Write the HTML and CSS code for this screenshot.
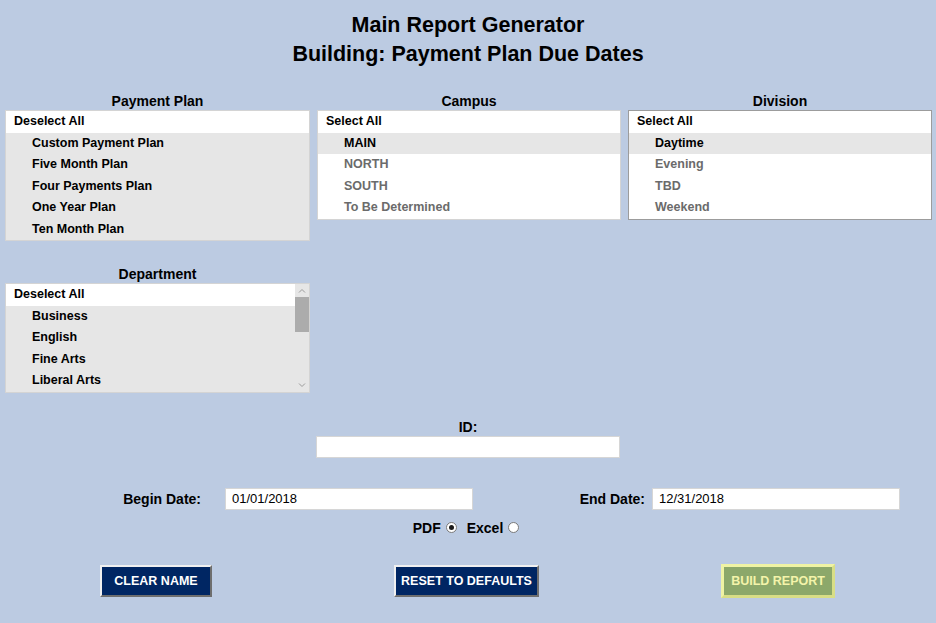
FILE: index.html
```html
<!DOCTYPE html>
<html lang="en">
<head>
    <meta charset="UTF-8">
    <title>Main Report Generator</title>
    <link rel="stylesheet" href="styles.css">
</head>
<body>
    <div class="header">
        <h1>Main Report Generator</h1>
        <h1>Building: Payment Plan Due Dates</h1>
    </div>

    <div class="lists">
        <div class="list-group">
            <div class="list-label">Payment Plan</div>
            <div class="list-box">
                <div class="row all">Deselect All</div>
                <div class="row sel">Custom Payment Plan</div>
                <div class="row sel">Five Month Plan</div>
                <div class="row sel">Four Payments Plan</div>
                <div class="row sel">One Year Plan</div>
                <div class="row sel">Ten Month Plan</div>
            </div>
        </div>

        <div class="list-group">
            <div class="list-label">Campus</div>
            <div class="list-box">
                <div class="row all">Select All</div>
                <div class="row sel">MAIN</div>
                <div class="row dim">NORTH</div>
                <div class="row dim">SOUTH</div>
                <div class="row dim">To Be Determined</div>
            </div>
        </div>

        <div class="list-group">
            <div class="list-label">Division</div>
            <div class="list-box dark">
                <div class="row all">Select All</div>
                <div class="row sel">Daytime</div>
                <div class="row dim">Evening</div>
                <div class="row dim">TBD</div>
                <div class="row dim">Weekend</div>
            </div>
        </div>

        <div class="list-group dept">
            <div class="list-label">Department</div>
            <div class="list-box scroll">
                <div class="scroll-rows">
                    <div class="row all">Deselect All</div>
                    <div class="row sel">Business</div>
                    <div class="row sel">English</div>
                    <div class="row sel">Fine Arts</div>
                    <div class="row sel">Liberal Arts</div>
                </div>
                <div class="scrollbar">
                    <svg width="8" height="5" viewBox="0 0 8 5"><path d="M1 4.5 L4 1.5 L7 4.5" fill="none" stroke="#9a9a9a" stroke-width="1"/></svg>
                    <div class="thumb"></div>
                    <div class="track"></div>
                    <svg width="8" height="5" viewBox="0 0 8 5"><path d="M1 0.5 L4 3.5 L7 0.5" fill="none" stroke="#9a9a9a" stroke-width="1"/></svg>
                </div>
            </div>
        </div>
    </div>

    <div class="id-group">
        <div class="field-label">ID:</div>
        <input type="text" class="text-input id-input">
    </div>

    <div class="dates">
        <label class="date-label begin">Begin Date:</label>
        <input type="text" class="text-input date-input" value="01/01/2018">
        <label class="date-label end">End Date:</label>
        <input type="text" class="text-input date-input end-input" value="12/31/2018">
    </div>

    <div class="formats">
        <span>PDF</span>
        <span class="radio checked"></span>
        <span class="excel">Excel</span>
        <span class="radio"></span>
    </div>

    <div class="buttons">
        <button class="btn clear-btn">CLEAR NAME</button>
        <button class="btn reset-btn">RESET TO DEFAULTS</button>
        <button class="btn build-btn">BUILD REPORT</button>
    </div>
</body>
</html>
```

FILE: styles.css
```css
body {
    margin: 0;
    background-color: #bccbe2;
    font-family: 'Liberation Sans', Arial, sans-serif;
    color: #000;
}

.header {
    padding-top: 11px;
    text-align: center;
}

h1 {
    margin: 0;
    font-size: 21.5px;
    line-height: 29px;
    font-weight: bold;
}

.lists {
    display: grid;
    grid-template-columns: 305px 304px 304px;
    column-gap: 7px;
    row-gap: 25px;
    align-items: start;
    padding-left: 5px;
    margin-top: 24px;
}

.list-label {
    text-align: center;
    font-size: 14px;
    font-weight: bold;
    line-height: 17px;
}

.list-box {
    background-color: #fff;
    border: 1px solid #d4d4d4;
}

.list-box.dark {
    border-color: #9c9c9c;
}

.row {
    height: 21.5px;
    line-height: 21px;
    font-size: 12.5px;
    font-weight: bold;
    padding-left: 26px;
    white-space: nowrap;
}

.row.all {
    padding-left: 8px;
    background-color: #fff;
}

.row.sel {
    background-color: #e6e6e6;
}

.row.dim {
    color: #6b6b6b;
}

.list-box.scroll {
    display: flex;
    background-color: #e6e6e6;
}

.scroll-rows {
    flex: 1;
}

.scrollbar {
    width: 14px;
    display: flex;
    flex-direction: column;
    align-items: center;
    background-color: #e6e6e6;
    padding: 4px 0 4px 0;
}

.thumb {
    width: 14px;
    height: 35px;
    margin-top: 4px;
    background-color: #acacac;
}

.track {
    flex: 1;
}

.id-group {
    width: 304px;
    margin: 26px auto 0;
}

.field-label {
    text-align: center;
    font-size: 14px;
    font-weight: bold;
    line-height: 16px;
    margin-bottom: 1px;
}

.text-input {
    display: block;
    box-sizing: border-box;
    height: 22px;
    border: 1px solid #d6d6d6;
    background-color: #fff;
    font-family: 'Liberation Sans', Arial, sans-serif;
    font-size: 13px;
    color: #000;
    padding: 0 6px;
    outline: none;
}

.id-input {
    width: 304px;
}

.dates {
    display: flex;
    align-items: center;
    margin-top: 30px;
}

.date-label {
    font-size: 14px;
    font-weight: bold;
    text-align: right;
}

.date-label.begin {
    width: 201px;
    margin-right: 24px;
}

.date-label.end {
    width: 172px;
    margin-right: 7px;
}

.date-input {
    width: 248px;
}

.formats {
    display: flex;
    justify-content: center;
    align-items: center;
    margin-top: 10px;
    height: 16px;
    font-size: 14px;
    font-weight: bold;
    padding-right: 4px;
}

.radio {
    box-sizing: border-box;
    width: 11px;
    height: 11px;
    margin-left: 5px;
    border: 1px solid #7a7a7a;
    border-radius: 50%;
    background-color: #fff;
    display: flex;
    align-items: center;
    justify-content: center;
}

.radio.checked::after {
    content: '';
    width: 5px;
    height: 5px;
    border-radius: 50%;
    background-color: #1a1a1a;
}

.excel {
    margin-left: 10px;
}

.buttons {
    display: flex;
    align-items: center;
    gap: 182px;
    padding-left: 100px;
    margin-top: 28px;
}

.btn {
    height: 32px;
    box-sizing: border-box;
    padding: 0;
    font-family: 'Liberation Sans', Arial, sans-serif;
    font-size: 12.5px;
    font-weight: bold;
    color: #fff;
    background-color: #002663;
    border: 2px solid;
    border-color: #f0f0f0 #6e6e6e #6e6e6e #f0f0f0;
    cursor: pointer;
}

.clear-btn {
    width: 112px;
}

.reset-btn {
    width: 145px;
}

.build-btn {
    width: 114px;
    height: 34px;
    color: #f4f4aa;
    background-color: #8ca86a;
    border: 3px solid;
    border-color: #eff3a4 #d8de86 #d8de86 #eff3a4;
}
```
